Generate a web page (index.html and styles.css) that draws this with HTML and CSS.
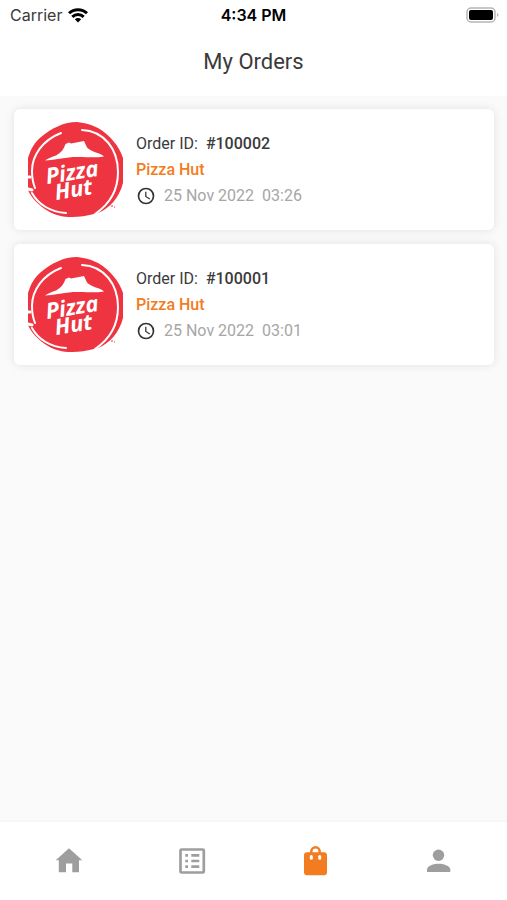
FILE: index.html
```html
<!DOCTYPE html>
<html lang="en">
<head>
    <meta charset="UTF-8">
    <meta name="viewport" content="width=device-width, initial-scale=1.0">
    <title>My Orders</title>
    <link rel="stylesheet" href="styles.css">
</head>
<body>
    <header>
        <div class="status-bar">
            <div class="carrier">
                <span>Carrier</span>
                <svg width="20" height="15" viewBox="0 0 20 15" fill="none" stroke="#000" stroke-width="3">
                    <path d="M1 5.300C6 .4 14 .4 19 5.300"/>
                    <path d="M4.300 8.800C7.500 5.700 12.500 5.700 15.700 8.800"/>
                    <path fill="#000" stroke="none" d="M6.800 11.200C8.600 9.500 11.400 9.500 13.200 11.200L10 14.500z"/>
                </svg>
            </div>
            <span class="clock">4:34 PM</span>
            <div class="battery">
                <svg width="33" height="16" viewBox="0 0 33 16">
                    <rect x="1" y="1" width="28" height="14" rx="4" fill="#fff" stroke="#b5b5b5" stroke-width="1.500"/>
                    <rect x="3" y="3" width="24" height="10" rx="2"/>
                    <path fill="#b5b5b5" d="M31 6c2 1 2 3 0 4z"/>
                </svg>
            </div>
        </div>
        <h1>My Orders</h1>
    </header>

    <main>
        <article class="card">
            <svg class="logo" viewBox="0 0 95 95">
                <g id="logo">
                    <path fill="#ee3440" d="M0 36C3 26 7 20 13 15C24 6 36 0 49 0C58 1 64 3 70 6C82 13 91 24 95 36V61C91 76 82 86 70 91L66 92C58 94 52 95 44 95C34 95 27 93 20 89C10 83 3 75 0 68Z"/>
                    <g fill="none" stroke="#fff" stroke-linecap="round">
                        <path stroke-width="2" d="M33 11C15 18 4 33 4 49C4 56 5 61 7 66"/>
                        <path stroke-width="2" d="M4 71C10 82 22 90 38 91"/>
                        <path stroke-width="2" d="M54 8C76 9 90 27 90 50C90 68 82 82 67 92"/>
                        <path stroke-width="3" d="M0 55H2M0 67L4 68"/>
                    </g>
                    <path fill="#fff" d="M17 38.500C20 36 24 35 28 33.500C33 31 36 27 37.500 22L41 20.500L43 21.500L56 19L59 25.500C63 30 73 31 76 34.500C70 36 56 34.500 45 35C34 36 25 38 17 38.500Z"/>
                    <text class="logo-text" x="19" y="62" transform="rotate(-9 19 62)">Pizza</text>
                    <text class="logo-text" x="28" y="78" transform="rotate(-9 28 78)">Hut</text>
                    <path stroke="#ee3440" d="M83 84h2M86 85h1"/>
                </g>
            </svg>
            <div class="info">
                <p class="order-id">Order ID: <strong>#100002</strong></p>
                <p class="restaurant">Pizza Hut</p>
                <p class="date">
                    <svg width="20" height="20" viewBox="0 0 24 24">
                        <g id="clock">
                            <circle cx="12" cy="12" r="9" fill="none" stroke="currentColor" stroke-width="2"/>
                            <path fill="currentColor" d="M12.500 7H11v6l5.200 3.200.8-1.300-4.500-2.700z"/>
                        </g>
                    </svg>
                    <span>25 Nov 2022</span>
                    <span>03:26</span>
                </p>
            </div>
        </article>
        <article class="card">
            <svg class="logo" viewBox="0 0 95 95"><use href="#logo"/></svg>
            <div class="info">
                <p class="order-id">Order ID: <strong>#100001</strong></p>
                <p class="restaurant">Pizza Hut</p>
                <p class="date">
                    <svg width="20" height="20" viewBox="0 0 24 24"><use href="#clock"/></svg>
                    <span>25 Nov 2022</span>
                    <span>03:01</span>
                </p>
            </div>
        </article>
    </main>

    <nav>
        <a href="#home" aria-label="Home">
            <svg viewBox="0 0 32 32" fill="currentColor">
                <path d="M16 3.300L29.300 15.300H26V27.300H19.300V18.500H13V27.300H5.800V15.300H2.700Z"/>
            </svg>
        </a>
        <a href="#menu" aria-label="Menu">
            <svg viewBox="0 0 32 32" fill="none" stroke="currentColor" stroke-width="2.700">
                <rect x="4.500" y="4.500" width="23.300" height="23" rx="1"/>
                <path d="M9.300 10.300H12M15.300 10.300H23.300M9.300 16H12M15.300 16H23.300M9.300 21.700H12M15.300 21.700H23.300"/>
            </svg>
        </a>
        <a href="#orders" class="active" aria-label="Orders">
            <svg viewBox="0 0 32 32" fill="currentColor">
                <path fill="none" stroke="currentColor" stroke-width="2.500" d="M12.300 8V6.500a4.200 4.200 0 0 1 8.400 0V8"/>
                <rect x="5" y="7.300" width="23" height="23" rx="3"/>
                <rect x="10.800" y="10" width="3" height="4.700" rx="1.500" fill="#fff"/>
                <rect x="19.200" y="10" width="3" height="4.700" rx="1.500" fill="#fff"/>
            </svg>
        </a>
        <a href="#profile" aria-label="Profile">
            <svg viewBox="0 0 32 32" fill="currentColor">
                <circle cx="16.500" cy="10.300" r="5.700"/>
                <path d="M5 27V24.500C5 20.500 12 18.700 16.500 18.700S28.300 20.500 28.300 24.500V27Z"/>
            </svg>
        </a>
    </nav>
</body>
</html>
```
FILE: styles.css
```css
* { box-sizing: border-box; }
body { font-family: Roboto, sans-serif; font-size: 16px; color: #3a3a3a; background-color: #fafafa; margin: 0; min-height: 100vh; display: flex; flex-direction: column; }
h1, p { margin: 0; }

/* Header */
header { background: white; padding-bottom: 20px; }
.status-bar { display: grid; grid-template-columns: 1fr auto 1fr; align-items: center; height: 30px; padding: 0 8px; font-family: Inter, sans-serif; }
.carrier { display: flex; align-items: center; gap: 6px; padding-left: 2px; }
.clock { font-weight: 600; color: #000; }
.battery { display: flex; justify-content: flex-end; }
h1 { font-size: 22px; font-weight: 400; line-height: 28px; text-align: center; padding-top: 18px; }

/* Orders */
main { flex: 1; display: flex; flex-direction: column; gap: 14px; padding: 13px 13px 13px 14px; }
.card { display: flex; align-items: center; gap: 13px; padding: 13px 14px; background: white; border-radius: 6px; box-shadow: 0 0 10px rgba(0, 0, 0, 0.1); }
.logo { width: 95px; height: 95px; flex-shrink: 0; }
.logo-text { font-family: "Open Sans", sans-serif; font-size: 22px; font-style: italic; font-weight: 700; fill: white; }
.info { line-height: 26px; }
.order-id strong { font-weight: 500; margin-left: 4px; }
.restaurant { font-weight: 500; color: #f37b20; }
.date { display: flex; align-items: center; gap: 8px; color: #a6a6a6; }
.date svg { color: #333; }

/* Bottom menu */
nav { display: flex; height: 78px; padding: 0 8px; background: white; box-shadow: 0 0 3px rgba(0, 0, 0, 0.06); }
nav a { flex: 1; display: flex; align-items: center; justify-content: center; color: #9e9e9e; }
nav a.active { color: #f37b20; }
nav svg { width: 32px; height: 32px; }
```
